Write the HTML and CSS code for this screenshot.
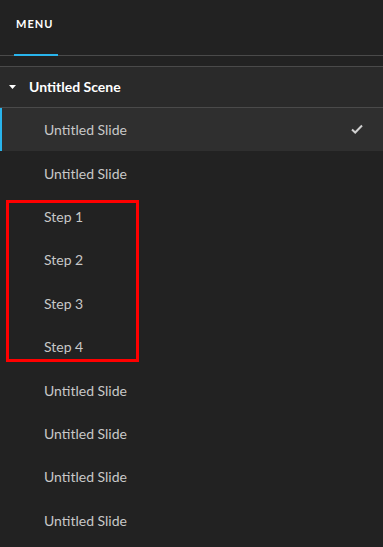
FILE: index.html
```html
<!DOCTYPE html>
<html lang="en">
<head>
  <meta charset="UTF-8" />
  <meta name="viewport" content="width=device-width, initial-scale=1.0"/>
  <title>Menu</title>
  <link rel="stylesheet" href="styles.css">
</head>
<body>
  <div class="panel">
    <div class="tabs">
      <div class="tab active">MENU</div>
    </div>

    <div class="scene">
      <div class="scene-head">
        <svg class="caret" width="7" height="4" viewBox="0 0 7 4"><path d="M0 0h7L3.5 4z" fill="#fff"/></svg>
        <span>Untitled Scene</span>
      </div>
      <ul class="slides">
        <li class="slide selected">
          Untitled Slide
          <svg class="check" width="12" height="10" viewBox="0 0 12 10"><path d="M1 5.5l3.2 3L11 1.5" fill="none" stroke="#d0d0d0" stroke-width="2"/></svg>
        </li>
        <li class="slide">Untitled Slide</li>
        <li class="slide">Step 1</li>
        <li class="slide">Step 2</li>
        <li class="slide">Step 3</li>
        <li class="slide">Step 4</li>
        <li class="slide">Untitled Slide</li>
        <li class="slide">Untitled Slide</li>
        <li class="slide">Untitled Slide</li>
        <li class="slide">Untitled Slide</li>
      </ul>
    </div>

    <!-- highlight box around the steps -->
    <div class="mark"></div>
  </div>
</body>
</html>
```

FILE: styles.css
```css
html, body {
  margin: 0;
  height: 100%;
  background: #222222;
  font-family: 'Lato', 'Open Sans', sans-serif;
  overflow: hidden;
}

.panel {
  position: relative;
  height: 100%;
}

/* top tab strip */
.tabs {
  display: flex;
  height: 55px;
  border-bottom: 1px solid #4a4a4a;
  padding-left: 14px;
}
.tab {
  box-sizing: border-box;
  height: 56px;
  margin-bottom: -1px;
  padding: 0 2px 8px;
  width: 44px;
  display: flex;
  align-items: center;
  color: #fff;
  font-size: 11px;
  font-weight: 700;
  letter-spacing: 1px;
  border-bottom: 2px solid transparent;
}
.tab.active {
  border-bottom-color: #29b4ec;
}

/* scene group */
.scene {
  margin-top: 10px;
  border-top: 1px solid #4a4a4a;
}
.scene-head {
  height: 39px;
  padding-bottom: 1px;
  display: flex;
  align-items: center;
  background: #2a2a2a;
  border-bottom: 1px solid #4a4a4a;
  color: #fff;
  font-size: 14px;
  font-weight: 700;
}
.caret {
  margin: 0 13px 0 9px;
}

.slides {
  list-style: none;
  margin: 0;
  padding: 0;
}
.slide {
  box-sizing: border-box;
  height: 43.4px;
  display: flex;
  align-items: center;
  justify-content: space-between;
  padding: 0 20px 0 44px;
  color: #c8c8c8;
  font-size: 14px;
}
.slide.selected {
  background: #2f2f2f;
  box-shadow: inset 2px 0 0 #29b4ec;
}
.check {
  margin-top: -2px;
}

/* red annotation box */
.mark {
  position: absolute;
  left: 6px;
  top: 200px;
  width: 133px;
  height: 162px;
  box-sizing: border-box;
  border: 3px solid #ff0000;
}
```
